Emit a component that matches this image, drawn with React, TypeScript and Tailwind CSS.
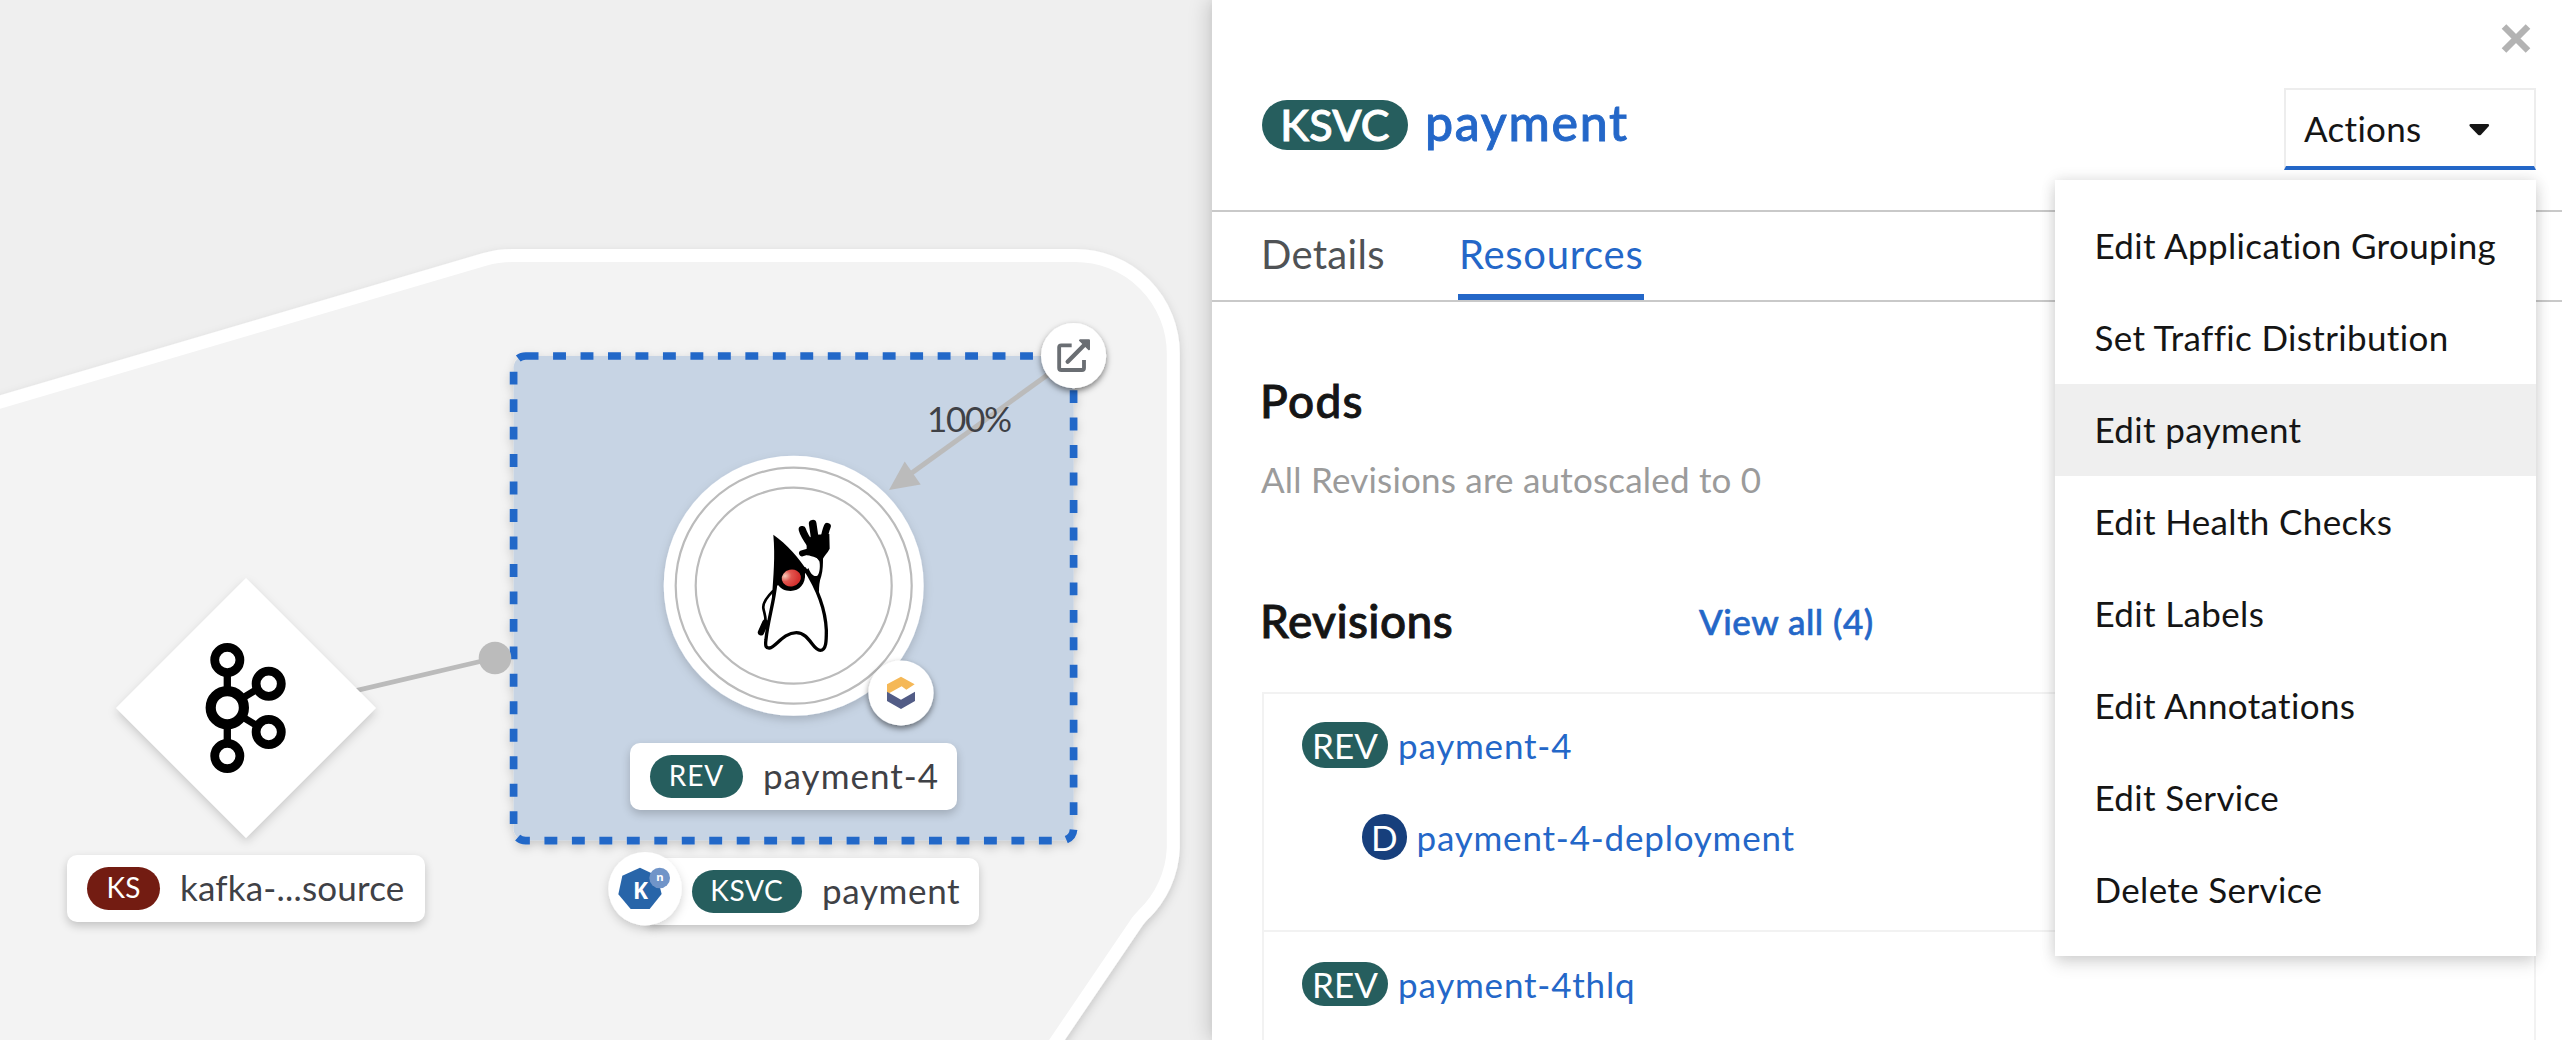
import type { ReactNode } from "react";

const menuItems = [
  "Edit Application Grouping",
  "Set Traffic Distribution",
  "Edit payment",
  "Edit Health Checks",
  "Edit Labels",
  "Edit Annotations",
  "Edit Service",
  "Delete Service",
];

function Duke() {
  return (
    <g>
      <path
        d="M400 482C386 496 368 518 370 534C372 549 379 560 376 580"
        fill="#fff"
        stroke="#000"
        strokeWidth="8"
      />
      <path d="M376 578L363 607" stroke="#000" strokeWidth="19" strokeLinecap="round" />
      <path
        d="M407 462C402 515 383 575 378 628C375 650 378 655 389 654C407 652 430 608 469 608C508 608 518 661 541 661C560 661 559 628 559 600C556 535 532 475 494 416Z"
        fill="#fff"
        stroke="#000"
        strokeWidth="10"
        strokeLinejoin="round"
      />
      <path d="M400 314C440 342 478 384 505 428L495 430C498 462 478 483 452 483C433 483 421 474 414 465C407 468 404 490 402 505L396 500C400 440 406 380 400 314Z" />
      <path d="M528 380L549 384C549 400 549 420 544 438C538 455 537 468 537 488L498 422L505 414C512 432 522 442 532 437C540 430 541 405 538 394Z" />
      <g stroke="#000" strokeLinecap="round" fill="none">
        <path d="M487 299C491 315 502 330 516 350" strokeWidth="22" />
        <path d="M518 281C522 305 524 320 526 345" strokeWidth="23" />
        <path d="M562 289C555 305 552 325 548 345" strokeWidth="21" />
        <path d="M486 370C498 366 506 364 516 362" strokeWidth="18" />
      </g>
      <path d="M500 326L528 314L568 312L569 356C562 370 552 378 548 388C538 392 524 378 500 376Z" />
      <ellipse cx="454" cy="444" rx="29" ry="25" fill="url(#nose)" transform="rotate(-12 454 444)" />
    </g>
  );
}

function KafkaIcon() {
  return (
    <g stroke="#000" fill="none">
      <path d="M227.3 672V692M227.3 723V744" strokeWidth="7.3" />
      <path d="M241 699L259 688M241 716L259 727" strokeWidth="7" />
      <g strokeWidth="8.8" fill="#fff">
        <circle cx="227.3" cy="660" r="12.6" />
        <circle cx="268.7" cy="683.7" r="12.6" />
        <circle cx="268.7" cy="732" r="12.6" />
        <circle cx="227.3" cy="756" r="12.6" />
      </g>
      <circle cx="227.3" cy="707.7" r="16.6" strokeWidth="10.2" fill="#fff" />
    </g>
  );
}

function TopologyDrawing() {
  return (
    <svg className="absolute inset-0" width="1212" height="1040" viewBox="0 0 1212 1040">
      <defs>
        <radialGradient id="nose" cx="0.2" cy="0.3" r="0.75">
          <stop offset="0" stopColor="#f7cbb9" />
          <stop offset="0.45" stopColor="#e2564f" />
          <stop offset="1" stopColor="#d5312f" />
        </radialGradient>
        <filter id="soft" x="-20%" y="-20%" width="140%" height="140%">
          <feDropShadow dx="0" dy="4" stdDeviation="5" floodColor="#030303" floodOpacity="0.17" />
        </filter>
        <filter id="badge" x="-30%" y="-30%" width="160%" height="160%">
          <feDropShadow dx="0" dy="3" stdDeviation="3" floodColor="#030303" floodOpacity="0.5" />
        </filter>
      </defs>

      <path
        d="M-40 413.8L484.3 259.5Q498 255.5 512 255.5H1075A98 98 0 0 1 1173.3 353.5V848A98 98 0 0 1 1143 915L1143 915Q1140 918 1137 922L1042 1062H-40Z"
        fill="#f3f3f3"
        stroke="#fff"
        strokeWidth="13"
        filter="url(#soft)"
      />

      <g filter="url(#soft)">
        <rect x="513.6" y="356" width="560" height="484.6" rx="12" fill="#c7d4e4" />
        <rect
          x="513.6"
          y="356"
          width="560"
          height="484.6"
          rx="12"
          fill="none"
          stroke="#2467c8"
          strokeWidth="7.7"
          strokeDasharray="12.9 14.57"
        />
      </g>

      <path d="M340 694.3L495 658" stroke="#bbb" strokeWidth="4.8" />
      <circle cx="495" cy="658" r="16.3" fill="#bbb" />
      <path d="M246 578L376 708L246 838L116 708Z" fill="#fff" filter="url(#soft)" />
      <KafkaIcon />

      <circle cx="793.7" cy="585.7" r="130" fill="#fff" filter="url(#soft)" />
      <circle cx="793.7" cy="585.7" r="118" fill="none" stroke="#bbb" strokeWidth="2.2" />
      <circle cx="793.7" cy="585.7" r="98" fill="none" stroke="#bbb" strokeWidth="2.2" />
      <g transform="translate(640 430) scale(0.33333)">
        <Duke />
      </g>

      <path d="M1073.7 356L911 473.5" stroke="#bbb" strokeWidth="5" />
      <path d="M889 490L904.7 461.5L920.7 484.5Z" fill="#bbb" />

      <circle cx="901" cy="693" r="32.6" fill="#fff" filter="url(#badge)" />
      <g transform="translate(640 430) scale(0.33333)">
        <path d="M783 740L824 763L799 779L785 769L747 790L741 786V763Z" fill="#f5b857" />
        <path d="M741 785L783 809L825 785V813L783 837L741 813Z" fill="#525c86" />
      </g>

      <circle cx="1073.6" cy="355.7" r="32.6" fill="#fff" filter="url(#badge)" />
      <g transform="translate(900 310) scale(0.33333)" stroke="#6a6e73" fill="none">
        <path d="M515 106H484Q477.500 106 477.500 112V174Q477.500 180 484 180H546Q552 180 552 174V150" strokeWidth="11.500" />
        <path d="M503 155L555 103" strokeWidth="13" strokeLinecap="round" />
        <path d="M540 91H567V118Z" fill="#6a6e73" strokeWidth="6" strokeLinejoin="round" />
      </g>
    </svg>
  );
}

function KnativeBadge() {
  return (
    <svg className="absolute left-[595px] top-[840px]" width="100" height="100" viewBox="595 840 100 100">
      <circle cx="645" cy="888.700" r="36.700" fill="#fff" filter="url(#soft)" />
      <g transform="translate(580 730) scale(0.33333)">
        <path d="M180 413L231 437L245 492L209 537H152L115 493L127 437Z" fill="#2865a9" />
        <circle cx="239" cy="444" r="31" fill="#7094c8" />
        <text x="159" y="507" fontFamily="Noto Sans, sans-serif" fontWeight="700" fontSize="68" fill="#fff">
          K
        </text>
        <text x="229" y="453" fontFamily="Noto Sans, sans-serif" fontWeight="700" fontSize="34" fill="#fff">
          n
        </text>
      </g>
    </svg>
  );
}

function NodeLabel({ className, badge, badgeClass, children }: { className: string; badge: string; badgeClass: string; children: ReactNode }) {
  return (
    <div
      className={`absolute flex h-[67px] items-center gap-5 whitespace-nowrap rounded-[10px] bg-white text-[35px] text-[#3f4146] shadow-[0_4px_10px_rgba(3,3,3,0.2)] ${className}`}
    >
      <span className={`flex h-[43px] shrink-0 items-center justify-center rounded-full pb-[2px] text-[28px] leading-none text-white ${badgeClass}`}>
        {badge}
      </span>
      <span className="pb-[2px] leading-none">{children}</span>
    </div>
  );
}

function Canvas() {
  return (
    <section className="relative w-[1212px] shrink-0 overflow-hidden bg-[#efefef]">
      <TopologyDrawing />
      <span className="absolute left-[927px] top-[398px] text-[35px] leading-[40px] tracking-[-1.3px] text-[#3f4146]">100%</span>
      <NodeLabel className="left-[67px] top-[854.500px] w-[358px] pl-5 tracking-[0.2px]" badge="KS" badgeClass="w-[73px] bg-[#731c12]">
        kafka-...source
      </NodeLabel>
      <NodeLabel className="left-[630px] top-[742.500px] w-[327px] pl-5 tracking-[1px]" badge="REV" badgeClass="w-[93px] bg-[#265e5e]">
        payment-4
      </NodeLabel>
      <NodeLabel className="left-[645px] top-[857.500px] w-[334px] pl-[46.500px] tracking-[0.650px]" badge="KSVC" badgeClass="w-[110.500px] bg-[#265e5e]">
        payment
      </NodeLabel>
      <KnativeBadge />
    </section>
  );
}

function ActionsMenu() {
  return (
    <ul className="absolute right-[26px] top-[180px] w-[481px] bg-white py-5 shadow-[0_8px_16px_rgba(3,3,3,0.12),0_0_14px_rgba(3,3,3,0.12)]">
      {menuItems.map((item) => (
        <li
          key={item}
          className={`h-[92px] whitespace-nowrap pl-[39.500px] text-[35px] leading-[90px] tracking-[0.350px] ${item === "Edit payment" ? "bg-[#efefef]" : ""}`}
        >
          {item}
        </li>
      ))}
    </ul>
  );
}

function Resource({ kind, name, className = "", badgeClass }: { kind: string; name: string; className?: string; badgeClass: string }) {
  return (
    <div className={`flex items-center gap-[10px] text-[35px] leading-[46px] ${className}`}>
      <span className={`flex items-center justify-center rounded-full text-white ${badgeClass}`}>{kind}</span>
      <a className="tracking-[0.800px] text-[#2467c8]">{name}</a>
    </div>
  );
}

function SidePanel() {
  return (
    <aside className="relative flex-1 bg-white text-[#151515] shadow-[-6px_0_18px_rgba(3,3,3,0.13),0_0_8px_rgba(3,3,3,0.06)]">
      <header className="h-[212px] border-b-2 border-[#c9c9c9] pl-[50px] pr-[26px]">
        <div className="flex h-[88px] justify-end pr-[5px] pt-[23px]">
          <svg width="30" height="31" viewBox="0 0 30 31" fill="none" stroke="#b3b3b3" strokeWidth="6.500">
            <path d="M3 3.500L27 27.500M27 3.500L3 27.500" />
          </svg>
        </div>
        <div className="flex items-start justify-between">
          <h1 className="flex items-start gap-[17px] pt-3 font-medium [-webkit-text-stroke:0.9px_currentColor]">
            <span className="flex h-[50px] w-[146px] items-center justify-center rounded-full bg-[#265e5e] pb-[2px] text-[43px] leading-none tracking-[0.200px] text-white">
              KSVC
            </span>
            <span className="text-[50px] leading-[44px] tracking-[1.700px] text-[#2467c8]">payment</span>
          </h1>
          <button className="flex h-[82px] w-[252px] items-center border-2 border-b-4 border-[#ededed] border-b-[#2467c8] pl-[18px] text-[35px] tracking-[0.300px]">
            <span className="w-[165px] text-left leading-[76px]">Actions</span>
            <svg className="mt-1" width="21" height="12" viewBox="0 0 21 12">
              <path d="M1.500 0H19Q21 0.500 19.500 2.500L12 10.700Q10.500 12 9 10.700L1 2.500Q-0.500 0.500 1.500 0Z" fill="#151515" />
            </svg>
          </button>
        </div>
      </header>
      <nav className="flex h-[90px] border-b-2 border-[#c9c9c9] pl-[50px] text-[40px] leading-[84px]">
        <a className="-ml-[1px] w-[197px] tracking-[0.300px] text-[#4f5255]">Details</a>
        <a className="h-[88px] w-[186px] border-b-[6px] border-[#2467c8] pl-[1px] tracking-[0.700px] text-[#2467c8]">Resources</a>
      </nav>
      <div className="pl-[50px] pr-[26px] pt-[68px]">
        <h2 className="-ml-[2px] text-[46px] font-medium leading-[62px] tracking-[1.300px] [-webkit-text-stroke:0.9px_currentColor]">Pods</h2>
        <p className="-ml-px mt-[22px] text-[35px] leading-[50px] tracking-[0.200px] text-[#9b9b9b]">All Revisions are autoscaled to 0</p>
        <div className="mt-[86px] flex h-[60px] text-[35px] font-medium leading-[62px]">
          <h2 className="-ml-[2px] w-[439px] text-[46px] tracking-[0.400px] [-webkit-text-stroke:0.9px_currentColor]">Revisions</h2>
          <a className="tracking-[0.500px] text-[#2467c8] [-webkit-text-stroke:0.6px_currentColor]">View all (4)</a>
        </div>
        <ul className="mt-[42px] border-2 border-[#f2f2f2]">
          <li className="h-[236px] pl-[38px] pt-7">
            <Resource kind="REV" name="payment-4" badgeClass="h-[46px] w-[86px] bg-[#265e5e]" />
            <Resource kind="D" name="payment-4-deployment" className="ml-[60px] mt-[46px]" badgeClass="h-[46px] w-[44.500px] bg-[#173f7c]" />
          </li>
          <li className="h-[236px] border-t-2 border-[#f2f2f2] pl-[38px] pt-[29px]">
            <Resource kind="REV" name="payment-4thlq" badgeClass="h-[44px] w-[86px] bg-[#265e5e]" />
          </li>
        </ul>
      </div>
      <ActionsMenu />
    </aside>
  );
}

export default function App() {
  return (
    <main className="flex h-[1040px] w-[2562px] overflow-hidden font-['Lato',sans-serif] [font-variant-ligatures:none]">
      <Canvas />
      <SidePanel />
    </main>
  );
}
